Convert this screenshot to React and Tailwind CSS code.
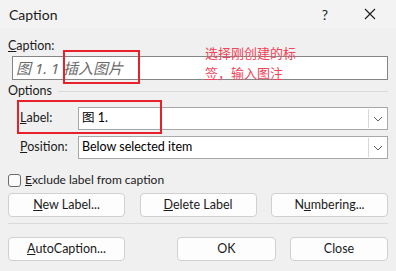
import React from 'react';

const font = { fontFamily: '"Segoe UI", Lato, "Noto Sans CJK SC", sans-serif' };

const Chevron = () => (
  <svg width="10" height="6" viewBox="0 0 10 6" fill="none">
    <path d="M1 1l4 4 4-4" stroke="#606060" strokeWidth="1" />
  </svg>
);

const Btn = ({ children, className = '' }) => (
  <button className={`h-[24px] rounded-[4px] border border-[#d0d0d0] bg-[#fdfdfd] text-[12.5px] text-[#1b1b1b] ${className}`}>
    {children}
  </button>
);

const Combo = ({ value }) => (
  <div className="flex h-[23px] flex-1 items-stretch border border-[#a8a8a8] bg-white">
    <div className="flex flex-1 items-center pl-[3px] text-[12.5px] text-black">{value}</div>
    <div className="m-[1px] flex w-[18px] items-center justify-center border-l border-[#d8d8d8] bg-white">
      <Chevron />
    </div>
  </div>
);

export default function App() {
  return (
    <div className="relative h-[271px] w-[396px] overflow-hidden bg-[#f0f0f0] text-[12.5px] text-[#1b1b1b]" style={font}>
      {/* Title bar */}
      <div className="flex h-[28px] items-center bg-[#f3f3f3] pl-[9px]">
        <span className="text-[14px]">Caption</span>
        <span className="ml-auto mr-[36px] text-[14px]">?</span>
        <svg className="mr-[20px]" width="12" height="12" viewBox="0 0 12 12">
          <path d="M1 1l10 10M11 1L1 11" stroke="#1b1b1b" strokeWidth="1.1" />
        </svg>
      </div>

      <div className="flex flex-col px-[8px]">
        <div className="mt-[9px] h-[17px] leading-[17px]"><u>C</u>aption:</div>
        <div className="ml-[4px] mt-[2px] flex h-[24px] items-center border border-[#858585] bg-white pl-[3px] text-[15px] italic text-[#6b6b6b]" style={{ fontFamily: '"Noto Sans", "Noto Sans CJK SC", sans-serif' }}>
          图 1. 1 插入图片
        </div>

        <div className="mt-[3px] flex h-[17px] items-center">
          <span>Options</span>
          <div className="ml-[6px] h-px flex-1 bg-[#dadada]" />
        </div>

        <div className="mt-[7px] flex items-center">
          <span className="w-[70px] pl-[12px]"><u>L</u>abel:</span>
          <Combo value="图 1." />
        </div>
        <div className="mt-[6px] flex items-center">
          <span className="w-[70px] pl-[12px]"><u>P</u>osition:</span>
          <Combo value="Below selected item" />
        </div>

        <div className="mt-[13px] flex h-[16px] items-center">
          <div className="h-[13px] w-[13px] rounded-[3px] border border-[#6a6a6a] bg-[#fbfbfb]" />
          <span className="ml-[4px] text-[12px]"><u>E</u>xclude label from caption</span>
        </div>

        <div className="mt-[5px] flex justify-between">
          <Btn className="w-[117px]"><u>N</u>ew Label...</Btn>
          <Btn className="w-[117px]"><u>D</u>elete Label</Btn>
          <Btn className="w-[117px]">N<u>u</u>mbering...</Btn>
        </div>

        <div className="mt-[6px] h-px bg-[#dadada]" />

        <div className="mt-[13px] flex">
          <Btn className="w-[117px]"><u>A</u>utoCaption...</Btn>
          <Btn className="ml-auto w-[99px]">OK</Btn>
          <Btn className="ml-[14px] w-[98px]">Close</Btn>
        </div>
      </div>

      {/* Annotations */}
      <div className="absolute left-[63px] top-[50px] h-[34px] w-[77px] border-2 border-[#e8202a]" />
      <div className="absolute left-[17px] top-[100px] h-[34px] w-[145px] border-2 border-[#e8202a]" />
      <div className="absolute left-[205px] top-[43px] text-[13px] leading-[20px] text-[#f0445a]" style={{ fontFamily: '"Noto Sans CJK SC", sans-serif' }}>
        选择刚创建的标<br />签，输入图注
      </div>
    </div>
  );
}
